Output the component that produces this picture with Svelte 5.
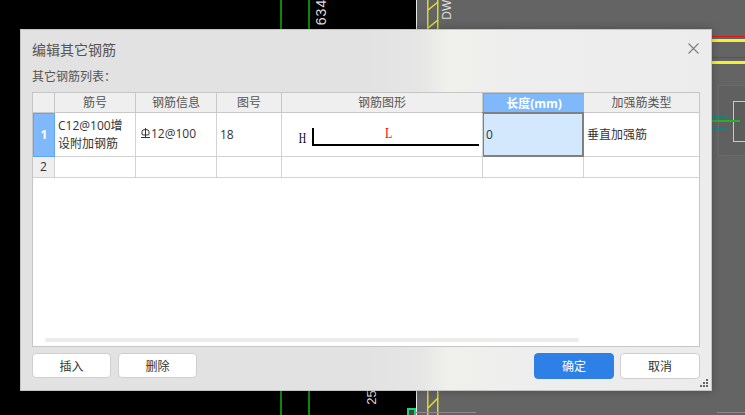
<script lang="ts">
  // Edit dialog for extra rebar entries, on top of a CAD drawing
  const columns = [
    { label: '筋号', key: 'name' },
    { label: '钢筋信息', key: 'info' },
    { label: '图号', key: 'shape' },
    { label: '钢筋图形', key: 'figure' },
    { label: '长度(mm)', key: 'length' },
    { label: '加强筋类型', key: 'type' },
  ];

  const row = {
    name: 'C12@100增设附加钢筋',
    info: '12@100',
    shape: '18',
    length: '0',
    type: '垂直加强筋',
  };
</script>

<div class="page">
  <!-- CAD drawing behind the dialog -->
  <div class="cad" aria-hidden="true">
    <div class="gray"></div>
    <i class="line green" style="left:280px"></i>
    <i class="line green" style="left:308px"></i>
    <span class="dim" style="left:308px;top:4px">634</span>
    <span class="dim two" style="left:364px;top:390px">25</span>
    <span class="dim small" style="left:432px;top:-2px">DWQ</span>
    <svg class="hatch" style="top:0" width="13" height="30" viewBox="0 0 13 30">
      <path d="M0.75 0V30M10.75 0V30" stroke="#d8d82e" stroke-width="1.5" fill="none" />
      <path d="M1 10L11 2M1 28L11 20" stroke="#e4e42a" stroke-width="1.5" fill="none" />
    </svg>
    <svg class="hatch" style="top:391px" width="13" height="24" viewBox="0 0 13 24">
      <path d="M0.75 0V24M10.75 0V24" stroke="#d8d82e" stroke-width="1.5" fill="none" />
      <path d="M1 17L11 7" stroke="#e4e42a" stroke-width="1.5" fill="none" />
    </svg>
    <i class="rule red" style="top:36px"></i>
    <i class="rule yellow" style="top:39px"></i>
    <i class="rule red" style="top:57px"></i>
    <i class="rule yellow" style="top:61px"></i>
    <div class="shade"></div>
    <div class="column-box"></div>
    <i class="tick teal" style="top:116px"></i>
    <i class="tick teal" style="top:128px"></i>
    <i class="tick lime" style="top:120px"></i>
    <div class="node"></div>
    <i class="edge" style="left:416px;width:60px"></i>
    <i class="edge" style="left:717px;width:28px"></i>
  </div>

  <div class="dialog">
    <header class="title-bar">
      <h1>编辑其它钢筋</h1>
      <button class="close" aria-label="关闭">
        <svg width="11" height="11" viewBox="0 0 11 11" fill="none" stroke="#7d7d7d" stroke-width="1.1">
          <path d="M0.5 0.5L10.5 10.5M10.5 0.5L0.5 10.5" />
        </svg>
      </button>
    </header>

    <div class="list-label">其它钢筋列表：</div>

    <div class="grid-wrap">
      <div class="grid">
        <div class="cell head corner"></div>
        {#each columns as col}
          <div class="cell head" class:active={col.key === 'length'}>{col.label}</div>
        {/each}

        <div class="cell index selected">1</div>
        <div class="cell wrap">{row.name}</div>
        <div class="cell info">
          <svg class="grade" width="9" height="10" viewBox="0 0 9 10" fill="none" stroke="#333" stroke-width="1">
            <path d="M1 6.5V3.5Q1 1.5 4.5 1.5T8 3.5V6.5Q8 7 4.5 7T1 6.5ZM4.5 0V9M0 9.5H9" />
          </svg>{row.info}
        </div>
        <div class="cell">{row.shape}</div>
        <div class="cell figure">
          <span class="dim-h">H</span>
          <span class="dim-l">L</span>
          <div class="bar"></div>
        </div>
        <div class="cell editing">{row.length}</div>
        <div class="cell">{row.type}</div>

        <div class="cell index second">2</div>
        {#each columns as col}
          <div class="cell second"></div>
        {/each}
      </div>
      <div class="scrollbar"></div>
    </div>

    <footer class="actions">
      <button class="btn">插入</button>
      <button class="btn">删除</button>
      <span class="spacer"></span>
      <button class="btn primary">确定</button>
      <button class="btn cancel">取消</button>
    </footer>

    <svg class="grip" width="9" height="9" viewBox="0 0 9 9" fill="#666">
      <rect x="6" y="0" width="2" height="2" />
      <rect x="3" y="3" width="2" height="2" />
      <rect x="6" y="3" width="2" height="2" />
      <rect x="0" y="6" width="2" height="2" />
      <rect x="3" y="6" width="2" height="2" />
      <rect x="6" y="6" width="2" height="2" />
    </svg>
  </div>
</div>

<style>
  :global(body) {
    margin: 0;
    background: #000;
  }

  .page {
    position: relative;
    width: 745px;
    height: 415px;
    overflow: hidden;
    background: #000;
    box-sizing: border-box;
    padding: 29px 0 0 20px;
    font-family: "Open Sans", "Noto Sans CJK SC", "Liberation Sans", sans-serif;
    font-size: 12px;
    color: #333;
  }

  .cad {
    position: absolute;
    inset: 0;
  }

  .gray {
    position: absolute;
    left: 416px;
    top: 0;
    right: 0;
    bottom: 0;
    background: #646464;
    border-left: 1px solid #e8e8e8;
  }

  .cad i {
    position: absolute;
    display: block;
  }

  .line {
    top: 0;
    bottom: 0;
    width: 2px;
  }

  .green {
    background: #078a07;
  }

  .dim {
    position: absolute;
    color: #ddd;
    font: 14px "Liberation Sans", sans-serif;
    letter-spacing: 1px;
    transform: rotate(-90deg);
    transform-origin: center;
  }

  .dim.two {
    font-size: 13px;
    letter-spacing: 0;
  }

  .dim.small {
    font-size: 12px;
    letter-spacing: 0;
  }

  .hatch {
    position: absolute;
    left: 427px;
  }

  .rule {
    left: 712px;
    right: 0;
  }

  .rule.red {
    height: 1px;
    background: #d81c1c;
  }

  .rule.yellow {
    height: 3px;
    background: #f2f22e;
  }

  .shade {
    position: absolute;
    left: 718px;
    top: 85px;
    right: -2px;
    height: 71px;
    box-sizing: border-box;
    border: 1px solid #6a6a6a;
    background: #606060;
  }

  .column-box {
    position: absolute;
    left: 733px;
    top: 101px;
    right: -2px;
    height: 39px;
    border: 1px solid #c9c9c9;
    background: #5c5c5c;
  }

  .tick {
    left: 712px;
    height: 1px;
  }

  .tick.teal {
    width: 15px;
    background: #138484;
  }

  .tick.lime {
    width: 28px;
    height: 2px;
    background: #22b522;
  }

  .node {
    position: absolute;
    left: 407px;
    top: 408px;
    width: 9px;
    height: 9px;
    box-sizing: border-box;
    border: 2px solid #12d878;
    background: #444;
  }

  .edge {
    top: 412px;
    height: 1px;
    background: #8a8a8a;
  }

  .dialog {
    position: relative;
    box-sizing: border-box;
    width: 692px;
    height: 362px;
    padding: 0 11px;
    border: 1px solid #c4c4c4;
    background: linear-gradient(90deg, #e2e2e2 0%, #e2e2e2 50%, #e6e6e6 58%, #f0f0ec 62%, #eeeeee 70%, #ececec 100%);
    box-shadow: 0 0 8px rgba(0, 0, 0, 0.25);
  }

  .title-bar {
    display: flex;
    align-items: center;
    justify-content: space-between;
    height: 37px;
  }

  h1 {
    margin: 0;
    font-size: 14px;
    font-weight: 400;
    color: #555;
  }

  .close {
    display: flex;
    padding: 0;
    margin-right: 1px;
    border: 0;
    background: none;
  }

  .list-label {
    height: 25px;
    line-height: 20px;
    color: #555;
  }

  .grid-wrap {
    position: relative;
    box-sizing: border-box;
    width: 668px;
    height: 255px;
    border: 1px solid #c6c6c6;
    background: #fff;
  }

  .grid {
    display: grid;
    grid-template-columns: 22px 81px 81px 65px 201px 101px 115px;
    grid-template-rows: 20px 44px 21px;
  }

  .cell {
    display: flex;
    align-items: center;
    padding-left: 3px;
    box-sizing: border-box;
    border-right: 1px solid #d2d2d2;
    border-bottom: 1px solid #d2d2d2;
    line-height: 18px;
    color: #333;
  }

  .cell:nth-child(7n) {
    border-right: 0;
  }

  .head {
    justify-content: center;
    padding: 0;
    background: #efefef;
    color: #555;
    border-color: #c8c8c8;
  }

  .head.active {
    margin: 0 -1px 0 0;
    border: 1px solid #6aa8f0;
    border-bottom: 0;
    background: #7fb9fb;
    color: #fff;
    font-weight: 700;
  }

  .index {
    justify-content: center;
    padding: 0;
    background: #efefef;
  }

  .index.selected {
    background: #7fb9fb;
    border: 1px solid #5ea5f5;
    color: #fff;
    font-weight: 700;
  }

  .wrap {
    padding-right: 8px;
    word-break: break-all;
  }

  .info {
    padding-left: 5px;
    padding-bottom: 2px;
  }

  .grade {
    margin: 0 1px 1px 0;
    flex: none;
  }

  .figure {
    position: relative;
    padding: 0;
  }

  .dim-h,
  .dim-l {
    position: absolute;
    font: 15px/1 "Liberation Serif", serif;
  }

  .dim-h {
    left: 15px;
    top: 18px;
    color: #000;
    transform: scaleX(0.68);
  }

  .dim-l {
    left: 102px;
    top: 13px;
    color: #f00;
    transform: scaleX(0.8);
  }

  .bar {
    position: absolute;
    left: 30px;
    top: 15px;
    width: 167px;
    height: 18px;
    box-sizing: border-box;
    border-left: 2px solid #000;
    border-bottom: 2px solid #000;
  }

  .editing {
    margin: -1px 0 0 -1px;
    padding-left: 2px;
    background: #d3e8fd;
    border: 2px solid #808080;
  }

  .scrollbar {
    position: absolute;
    left: 12px;
    top: 245px;
    width: 534px;
    height: 4px;
    border-radius: 2px;
    background: #ebebeb;
  }

  .actions {
    display: flex;
    align-items: flex-start;
    gap: 7px;
    margin-top: 6px;
  }

  .spacer {
    flex: 1;
  }

  .btn {
    box-sizing: border-box;
    width: 79px;
    height: 25px;
    padding: 0;
    border: 1px solid #cfcfcf;
    border-radius: 4px;
    background: #fff;
    color: #333;
    font: inherit;
  }

  .btn.primary {
    width: 80px;
    height: 26px;
    margin-right: -1px;
    border-color: #2e7fe6;
    background: #2e7fe6;
    color: #fff;
  }

  .btn.cancel {
    width: 80px;
    height: 26px;
  }

  .grip {
    position: absolute;
    right: 2px;
    bottom: 2px;
  }
</style>
